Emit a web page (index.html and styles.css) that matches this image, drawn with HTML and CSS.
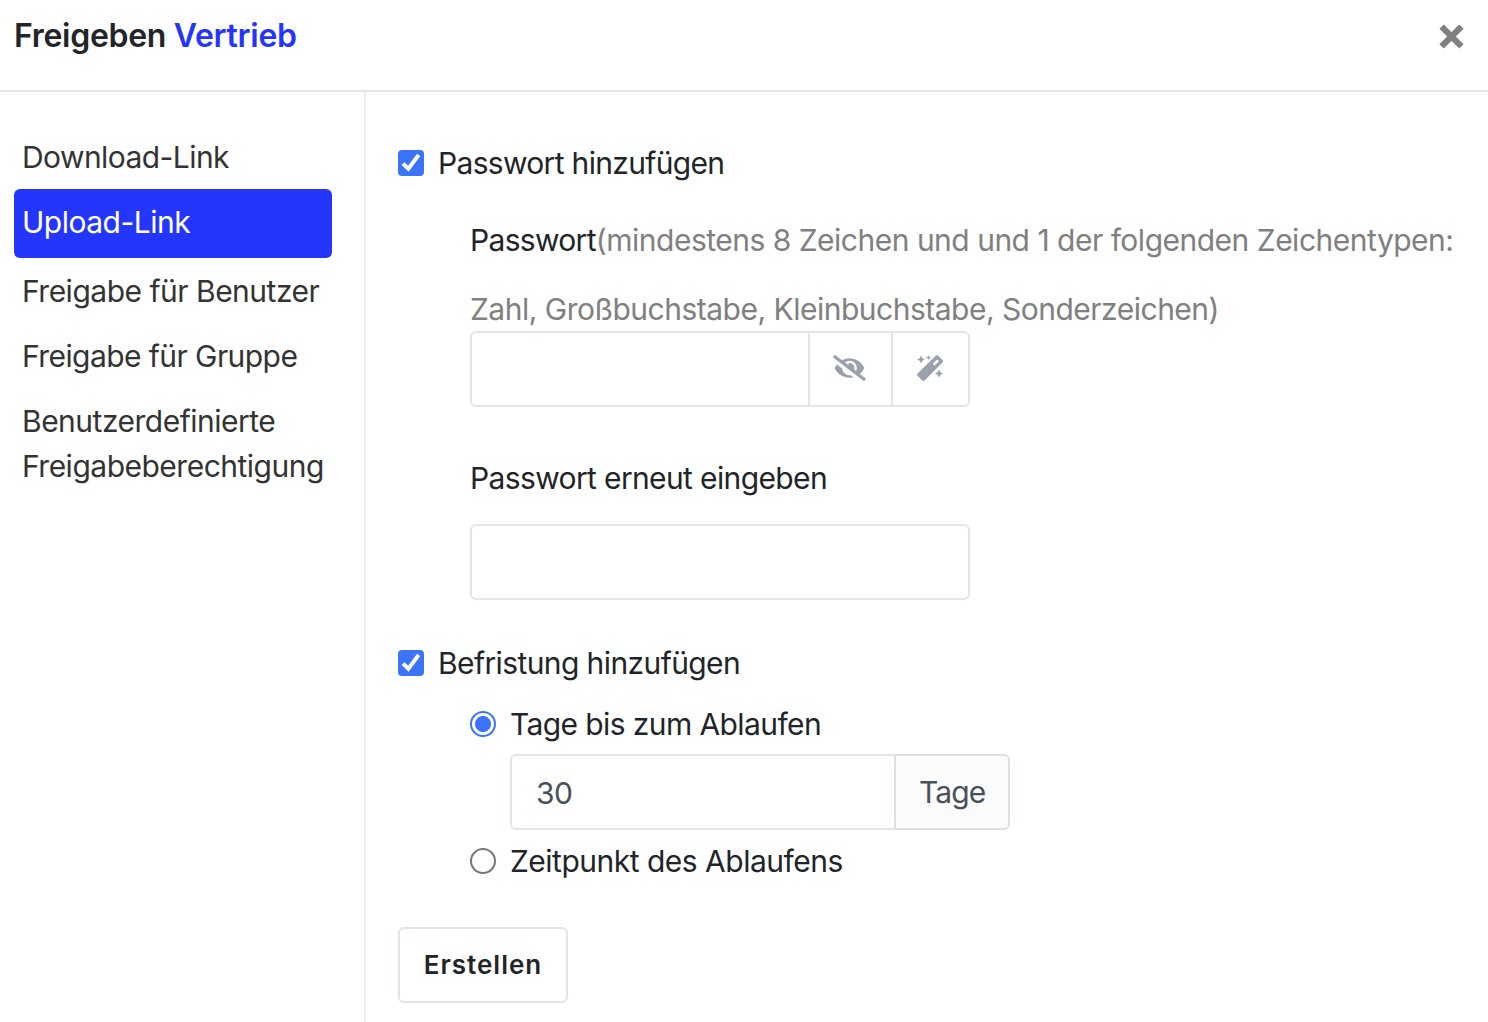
FILE: index.html
```
<!DOCTYPE html>
<html lang="de">
<head>
  <meta charset="UTF-8">
  <meta name="viewport" content="width=device-width, initial-scale=1.0">
  <title>Freigeben Vertrieb</title>
  <link rel="stylesheet" href="styles.css">
</head>
<body>
  <div class="dialog">
    <header class="dialog-header">
      <h5 class="dialog-title">Freigeben <span class="dialog-name">Vertrieb</span></h5>
      <button class="close" type="button" aria-label="Schließen">
        <svg viewBox="0 0 24 24"><path d="M2.5 2.5L21.5 21.5M21.5 2.5L2.5 21.5"/></svg>
      </button>
    </header>
    <div class="dialog-content">
      <nav class="side">
        <a class="nav-link nav-download">Download-Link</a>
        <a class="nav-link active">Upload-Link</a>
        <a class="nav-link">Freigabe für Benutzer</a>
        <a class="nav-link nav-group">Freigabe für Gruppe</a>
        <a class="nav-link">Benutzerdefinierte Freigabeberechtigung</a>
      </nav>
      <form class="main">
        <label class="check-row">
          <input class="checkbox" type="checkbox" checked>
          <svg class="tick" viewBox="0 0 26 26"><rect width="26" height="26" rx="4"/><path d="M5 13.6L10.4 18.8L20.7 4.9"/></svg>
          <span class="t-password">Passwort hinzufügen</span>
        </label>
        <div class="password-group">
          <div class="hint-label"><span class="t-password">Passwort</span><span class="tip">(mindestens 8 Zeichen und und 1 der folgenden Zeichentypen:<br>Zahl, Großbuchstabe, Kleinbuchstabe, Sonderzeichen)</span></div>
          <div class="input-group">
            <input class="form-control" type="password">
            <button class="addon addon-eye" type="button" aria-label="Anzeigen">
              <svg viewBox="0 0 640 512"><path d="M320 400c-75.85 0-137.25-58.71-142.9-133.11L72.2 185.82c-13.79 17.3-26.48 35.59-36.72 55.59a32.35 32.35 0 0 0 0 29.19C89.71 376.41 197.07 448 320 448c26.91 0 52.87-4 77.89-10.46L346 397.39a144.13 144.13 0 0 1-26 2.61zm313.82 58.1l-110.55-85.44a331.25 331.25 0 0 0 81.25-102.07 32.35 32.35 0 0 0 0-29.19C550.29 135.59 442.93 64 320 64a308.15 308.15 0 0 0-147.32 37.7L45.46 3.37A16 16 0 0 0 23 6.18L3.37 31.45A16 16 0 0 0 6.18 53.9l588.36 454.73a16 16 0 0 0 22.46-2.81l19.64-25.27a16 16 0 0 0-2.82-22.45zm-183.72-142l-39.3-30.38A94.75 94.75 0 0 0 416 256a94.76 94.76 0 0 0-121.31-92.21A47.65 47.65 0 0 1 304 192a46.64 46.64 0 0 1-1.54 10l-73.61-56.89A142.31 142.31 0 0 1 320 112a143.92 143.92 0 0 1 144 144c0 21.63-5.29 41.79-13.9 60.11z"/></svg>
            </button>
            <button class="addon addon-magic" type="button" aria-label="Generieren">
              <svg viewBox="0 0 26 26"><path fill-rule="evenodd" d="M18.4 1a2.2 2.2 0 0 1 3.1 0l3.7 3.7a2.2 2.2 0 0 1 0 3.1L7.8 25.2a2 2 0 0 1-2.8 0L.8 21a2 2 0 0 1 0-2.8zM20 4.4l-3.7 3.7a1 1 0 0 0 0 1.3l.6.6a1 1 0 0 0 1.3 0l3.8-3.8z"/><path d="M4 .7l1.3 2.5L7.8 4.5 5.3 5.8 4 8.3 2.7 5.8.2 4.5 2.7 3.2zM11.5.2l.8 1.6 1.6.8-1.6.8-.8 1.6-.8-1.6-1.6-.8 1.6-.8zM22 14.6l1.3 2.7 2.7 1.3-2.7 1.3-1.3 2.7-1.3-2.7-2.7-1.3 2.7-1.3z"/></svg>
            </button>
          </div>
          <div class="repeat-label">Passwort erneut eingeben</div>
          <input class="form-control repeat" type="password">
        </div>
        <label class="check-row">
          <input class="checkbox" type="checkbox" checked>
          <svg class="tick" viewBox="0 0 26 26"><rect width="26" height="26" rx="4"/><path d="M5 13.6L10.4 18.8L20.7 4.9"/></svg>
          <span class="t-expire">Befristung hinzufügen</span>
        </label>
        <div class="expire-group">
          <label class="radio-row">
            <input class="radio" type="radio" name="expire" checked>
            <span class="t-days">Tage bis zum Ablaufen</span>
          </label>
          <div class="input-group days">
            <input class="form-control" type="text" value="30">
            <span class="unit">Tage</span>
          </div>
          <label class="radio-row">
            <input class="radio" type="radio" name="expire">
            <span>Zeitpunkt des Ablaufens</span>
          </label>
        </div>
        <button class="btn" type="button">Erstellen</button>
      </form>
    </div>
  </div>
</body>
</html>
```
FILE: styles.css
```
* {
  box-sizing: border-box;
}

body {
  margin: 0;
  overflow: hidden;
  background: #fff;
  color: #212529;
  font: 30px/45px Inter, "Liberation Sans", sans-serif;
  letter-spacing: -0.5px;
}

button,
input {
  margin: 0;
  font: inherit;
  letter-spacing: inherit;
}

.dialog {
  display: flex;
  flex-direction: column;
  height: 100vh;
}

.dialog-header {
  display: flex;
  justify-content: space-between;
  align-items: flex-start;
  height: 92px;
  padding: 12px 24px 0 14px;
  border-bottom: 2px solid #e2e4ec;
}

.dialog-title {
  margin: 0;
  font-size: 32px;
  font-weight: 600;
  line-height: 47px;
  letter-spacing: -0.3px;
}

.dialog-name {
  color: #2436fb;
}

.close {
  margin-top: 12px;
  padding: 0;
  border: 0;
  background: none;
  line-height: 0;
}

.close svg {
  width: 25px;
  height: 25px;
  stroke: #808080;
  stroke-width: 6;
}

.dialog-content {
  display: flex;
  flex: 1;
}

.side {
  width: 366px;
  padding: 32px 32px 0 14px;
  border-right: 2px solid #eee;
}

.nav-link {
  display: block;
  padding: 11px 0 9px 8px;
  color: #333;
}

.nav-link.active {
  padding-bottom: 13px;
  border-radius: 6px;
  background: #2436fb;
  color: #fff;
}

.nav-download,
.nav-group {
  letter-spacing: -0.57px;
}

.main {
  flex: 1;
  padding: 49px 0 0 32px;
}

.check-row,
.radio-row {
  display: flex;
  align-items: center;
  gap: 14px;
  height: 45px;
  white-space: nowrap;
}

.t-password {
  letter-spacing: -0.68px;
}

.t-expire,
.t-days {
  letter-spacing: -0.6px;
}

.checkbox {
  display: none;
}

.tick {
  width: 26px;
  height: 26px;
  margin-bottom: 2px;
  fill: #3b74f8;
}

.tick path {
  fill: none;
  stroke: #fff;
  stroke-width: 4;
}

.password-group {
  padding: 20px 0 0 72px;
}

.hint-label {
  line-height: 69px;
  white-space: nowrap;
}

.tip {
  color: #808080;
}

.input-group {
  display: flex;
  width: 500px;
}

.hint-label + .input-group {
  margin-top: -13px;
}

.form-control {
  flex: 1;
  min-width: 0;
  height: 76px;
  padding: 2px 24px 0;
  border: 2px solid #e2e5ec;
  border-radius: 6px;
  background: #fff;
  color: #495057;
  outline: 0;
}

.input-group .form-control {
  border-right: 0;
  border-radius: 6px 0 0 6px;
}

.addon {
  display: flex;
  align-items: center;
  justify-content: center;
  padding: 0 2px 2px 0;
  border: 2px solid #e2e5ec;
  background: #fff;
}

.addon svg {
  height: 26px;
  fill: #9aa0ac;
}

.addon-eye {
  width: 83px;
  border-right: 0;
}

.addon-eye svg {
  width: 33px;
}

.addon-magic {
  width: 79px;
  border-radius: 0 6px 6px 0;
}

.addon-magic svg {
  width: 26px;
}

.repeat-label {
  padding: 49px 0 23px;
  letter-spacing: -0.63px;
}

.repeat {
  display: block;
  width: 500px;
}

.password-group + .check-row {
  margin-top: 41px;
}

.expire-group {
  padding: 16px 0 0 72px;
}

.radio {
  appearance: none;
  width: 26px;
  height: 26px;
  margin-bottom: 2px;
  border: 2px solid #767676;
  border-radius: 50%;
  background: #fff;
}

.radio:checked {
  border-color: #3b74f8;
  background: radial-gradient(circle, #3b74f8 7.5px, #fff 8.5px);
}

.days {
  margin: 7px 0 9px 40px;
}

.unit {
  width: 116px;
  padding: 14px 0 0 23px;
  border: 2px solid #dddfeb;
  border-radius: 0 6px 6px 0;
  background: #fbfbfc;
  color: #495057;
  letter-spacing: -0.9px;
}

.btn {
  display: block;
  width: 170px;
  height: 76px;
  margin-top: 43px;
  padding: 0 0 2px;
  border: 2px solid #e2e4ec;
  border-radius: 6px;
  background: #fff;
  color: #212529;
  font-size: 26px;
  font-weight: 600;
  letter-spacing: 1px;
}
```
